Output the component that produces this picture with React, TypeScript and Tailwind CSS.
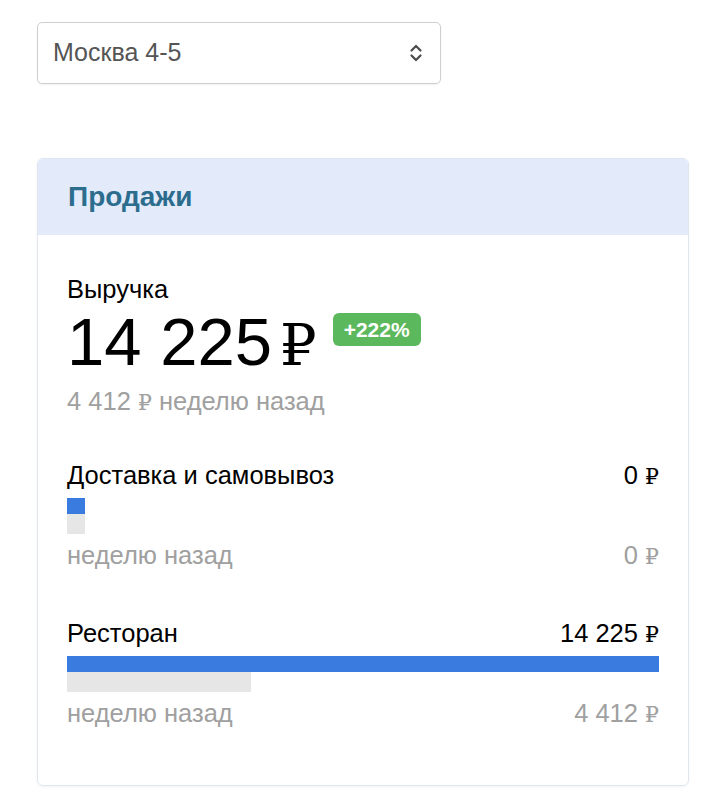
import React from 'react'

const Rub = ({ className = '' }: { className?: string }) => (
    <span className={`font-['Liberation_Serif','DejaVu_Serif',serif] text-[0.86em] leading-none ${className}`}>₽</span>
)

type Row = {
    title: string
    value: string
    prev: string
    now: number
    before: number
}

const rows: Row[] = [
    { title: 'Доставка и самовывоз', value: '0', prev: '0', now: 0, before: 0 },
    { title: 'Ресторан', value: '14 225', prev: '4 412', now: 14225, before: 4412 },
]

const max = 14225

function SalesRow({ row, first }: { row: Row; first: boolean }) {
    const nowPct = (row.now / max) * 100
    const prevPct = (row.before / max) * 100

    return (
        <div className={first ? 'mt-[45px]' : 'mt-[49px]'}>
            <div className="flex h-[29px] items-center justify-between text-[25.5px] leading-[29px] text-black">
                <span>{row.title}</span>
                <span>{row.value} <Rub /></span>
            </div>
            <div className="mt-[8px]">
                <div className="h-[16px] min-w-[18px] bg-[#3a7be0]" style={{ width: `${nowPct}%` }} />
                <div className="h-[20px] min-w-[18px] bg-[#e6e6e6]" style={{ width: `${prevPct}%` }} />
            </div>
            <div className="mt-[7px] flex h-[29px] items-center justify-between text-[25.5px] leading-[29px] text-[#a0a0a0]">
                <span>неделю назад</span>
                <span>{row.prev} <Rub /></span>
            </div>
        </div>
    )
}

export default function App() {
    return (
        <div className="min-h-screen bg-white px-[37px] pt-[22px] pb-[16px] font-['Liberation_Sans',Arial,sans-serif]">

            <div className="flex h-[62px] w-[404px] items-center justify-between rounded-[5px] border border-[#cfcfcf] pl-[15px] pr-[17px] shadow-[0_1px_2px_rgba(0,0,0,0.06)]">
                <span className="text-[25px] text-[#555]">Москва 4-5</span>
                <svg width="14" height="18" viewBox="0 0 14 18" fill="none" stroke="#4a4a4a" strokeWidth="2.2" strokeLinecap="round" strokeLinejoin="round">
                    <path d="M2.5 6.5 L7 2 L11.5 6.5" />
                    <path d="M2.5 11.5 L7 16 L11.5 11.5" />
                </svg>
            </div>

            <div className="mt-[74px] w-[652px] overflow-hidden rounded-[6px] border border-[#e0e6ef] shadow-[0_1px_3px_rgba(0,0,0,0.05)]">

                <div className="flex h-[76px] items-center bg-[#e3ebfb] px-[30px]">
                    <h2 className="text-[28px] font-bold text-[#2c6d8e]">Продажи</h2>
                </div>

                <div className="px-[29px] pt-[40px] pb-[57px]">
                    <div className="text-[25.5px] leading-[28px] text-black">Выручка</div>

                    <div className="mt-[5px] flex items-start">
                        <div className="h-[67px] text-[67px] leading-none text-black">14 225<Rub className="ml-[0.14em]" /></div>
                        <span className="ml-[16px] mt-[5px] rounded-[6px] bg-[#5cb85c] px-[11px] py-[4px] text-[21px] font-bold leading-[25px] text-white">+222%</span>
                    </div>

                    <div className="mt-[12px] h-[29px] text-[25.5px] leading-[29px] text-[#a0a0a0]">4 412 <Rub /> неделю назад</div>

                    {rows.map((row, i) => (
                        <SalesRow key={row.title} row={row} first={i === 0} />
                    ))}
                </div>

            </div>

        </div>
    )
}
